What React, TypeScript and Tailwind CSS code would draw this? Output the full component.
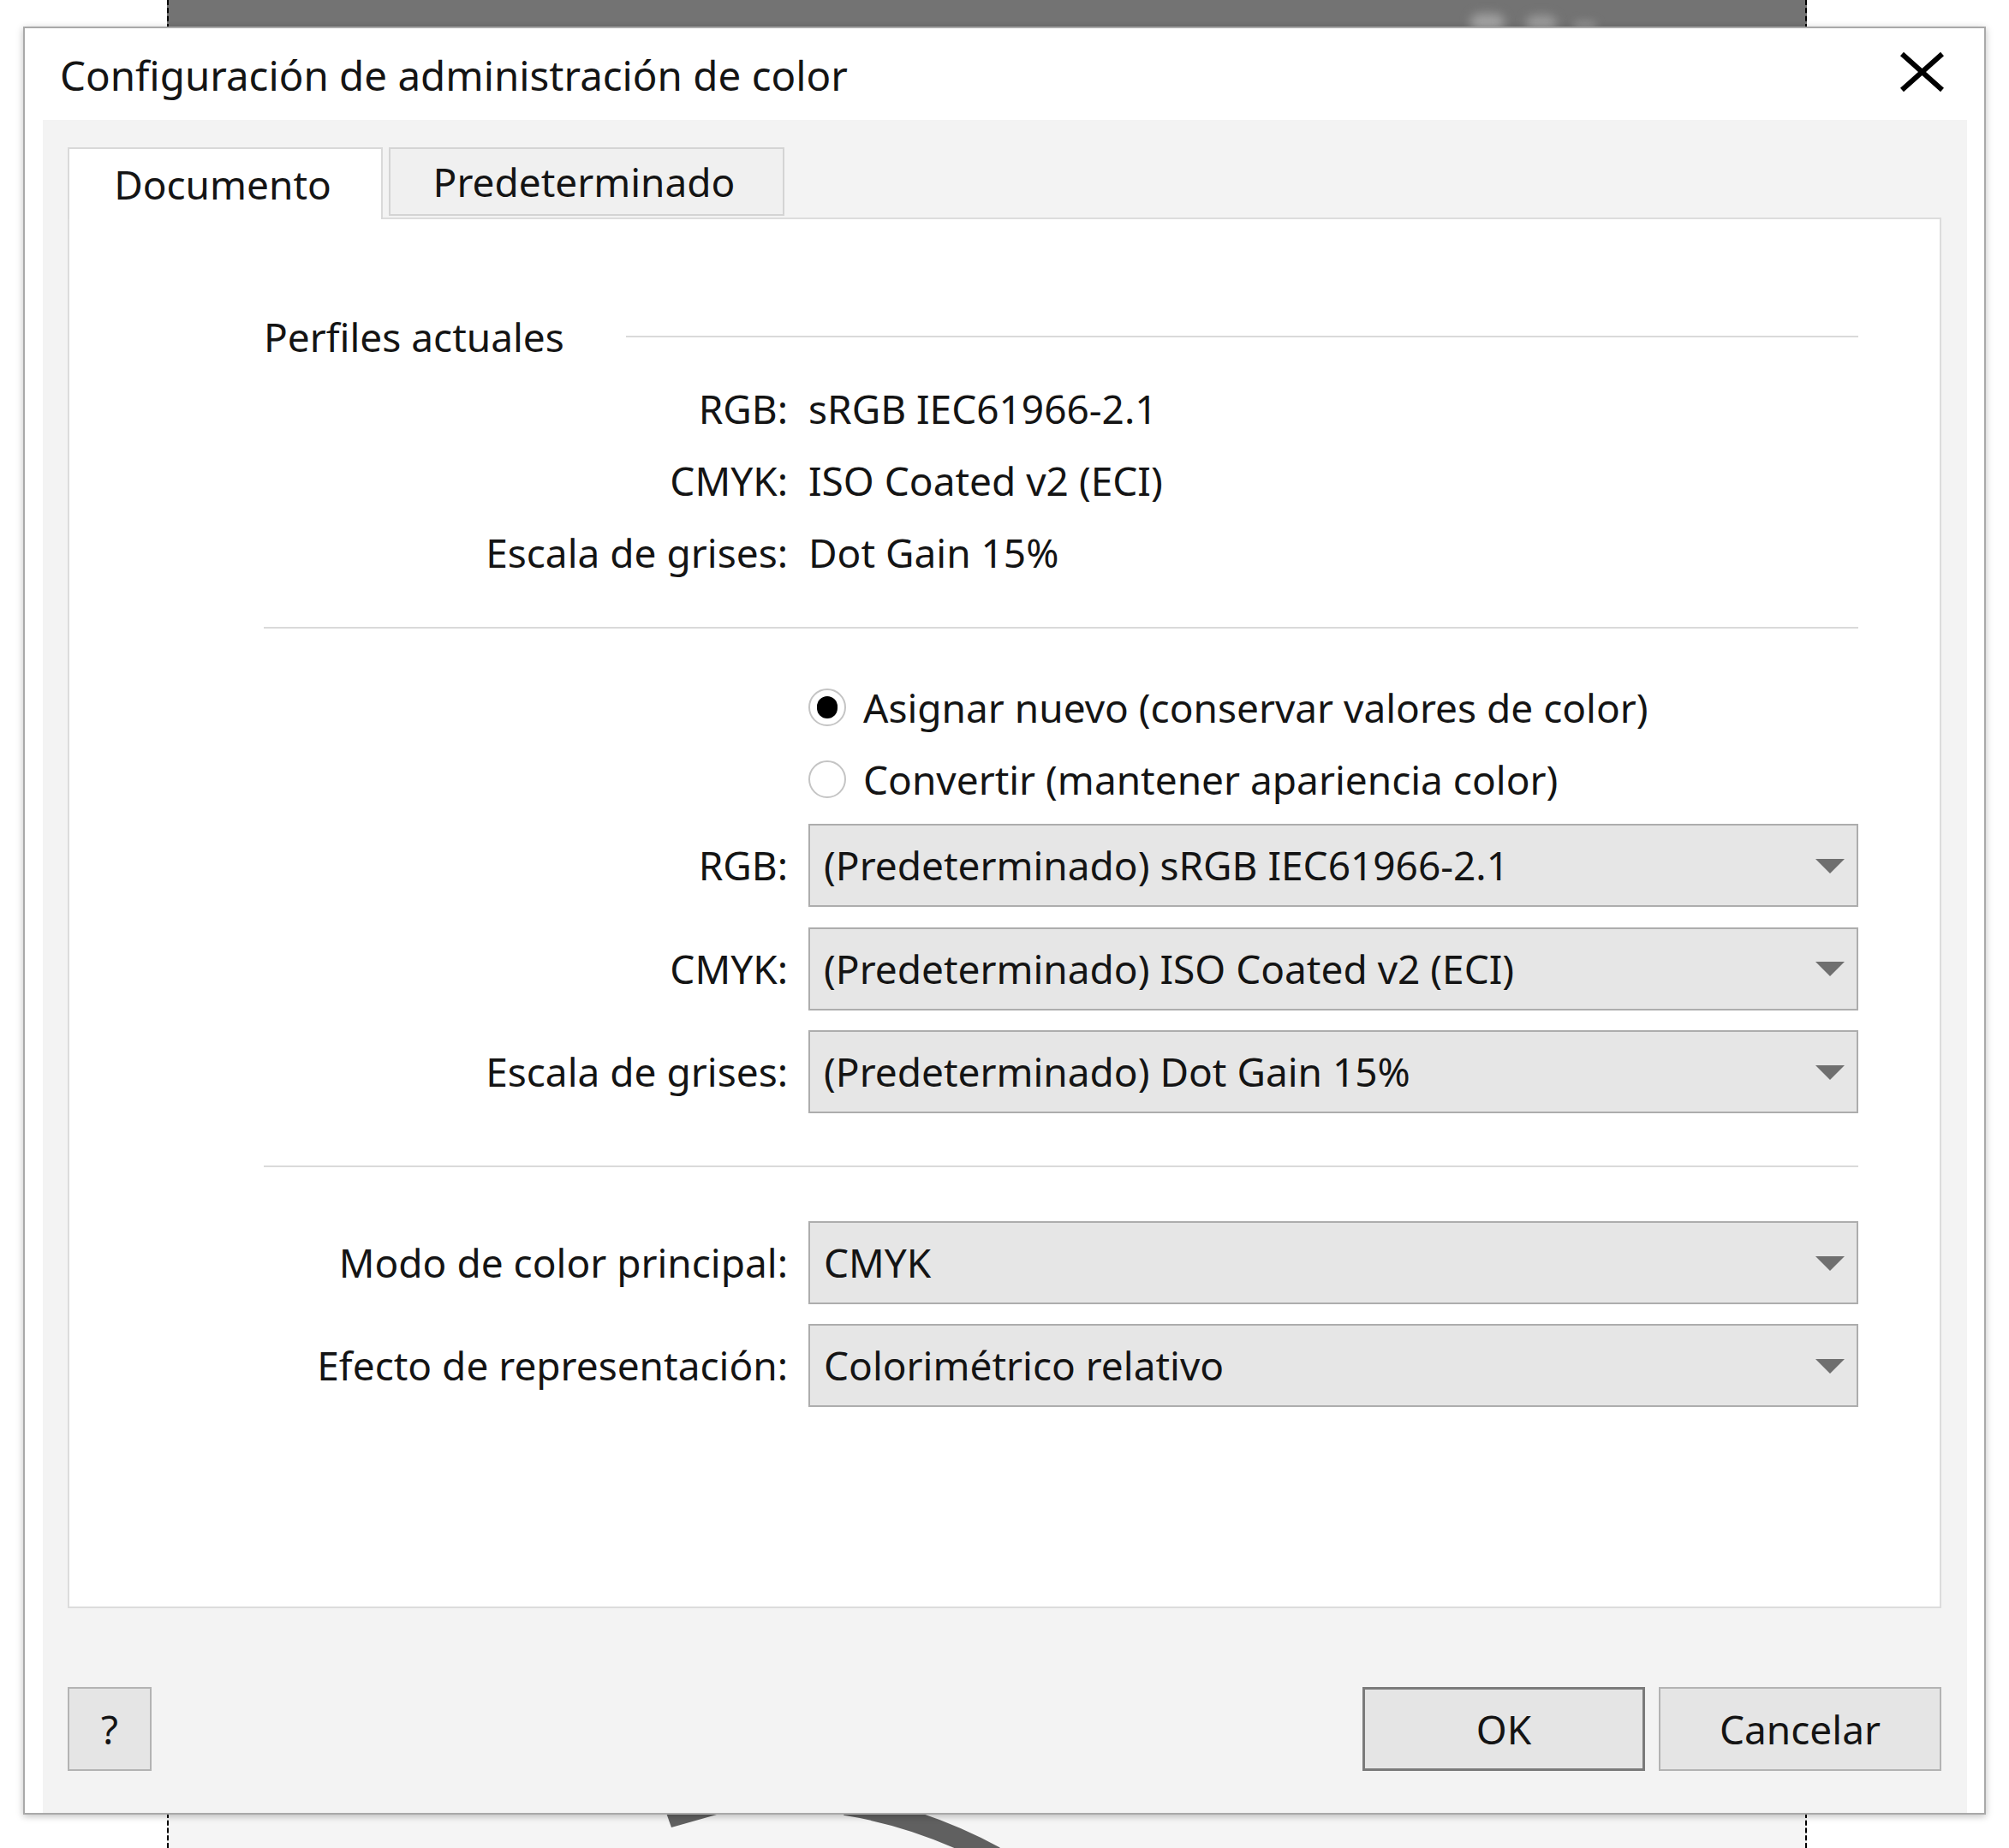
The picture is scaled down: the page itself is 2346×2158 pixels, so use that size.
import React from 'react'

const font = "font-['Noto_Sans','Liberation_Sans',sans-serif]"

function Arrow() {
  return (
    <svg width="34" height="18" viewBox="0 0 34 18" className="shrink-0">
      <path d="M0 1H34L17 18Z" fill="#6f6f6f" />
    </svg>
  )
}

function Select({ value }: { value: string }) {
  return (
    <div className="flex h-[97px] items-center justify-between border-2 border-[#adadad] bg-[#e6e6e6] pl-[16px] pr-[14px]">
      <span className="whitespace-nowrap">{value}</span>
      <Arrow />
    </div>
  )
}

function InfoRow({ label, value }: { label: string; value: string }) {
  return (
    <div className="grid h-[84px] grid-cols-[612px_1fr] items-center gap-x-[24px]">
      <span className="text-right whitespace-nowrap">{label}</span>
      <span className="whitespace-nowrap">{value}</span>
    </div>
  )
}

function SelectRow({ label, value }: { label: string; value: string }) {
  return (
    <div className="grid grid-cols-[612px_1fr] items-center gap-x-[24px]">
      <span className="text-right whitespace-nowrap">{label}</span>
      <Select value={value} />
    </div>
  )
}

function Radio({ checked, label }: { checked?: boolean; label: string }) {
  return (
    <div className="grid h-[84px] grid-cols-[612px_1fr] items-center gap-x-[24px]">
      <span />
      <div className="flex items-center gap-[20px]">
        <span className="flex h-[44px] w-[44px] items-center justify-center rounded-full border-2 border-[#c4c4c4] bg-white">
          {checked && <span className="h-[26px] w-[24px] rounded-full bg-black" />}
        </span>
        <span className="whitespace-nowrap">{label}</span>
      </div>
    </div>
  )
}

function Button({ label, primary, className }: { label: string; primary?: boolean; className?: string }) {
  return (
    <button
      className={
        'flex h-[98px] items-center justify-center bg-[#e5e5e5] ' +
        (primary ? 'border-[3px] border-[#7a7a7a] ' : 'border-2 border-[#b3b3b3] ') +
        (className ?? '')
      }
    >
      {label}
    </button>
  )
}

export default function App() {
  return (
    <div className={`relative h-[2158px] w-[2346px] overflow-hidden bg-white text-[46px] text-[#141414] ${font}`}>
      {/* app behind the dialog */}
      <div className="absolute left-[195px] top-0 h-[34px] w-[1915px] border-x-2 border-dashed border-x-black bg-[#737373]">
        <div className="absolute left-[1520px] top-[16px] h-[22px] w-[40px] rounded-full bg-[#a0a0a0] blur-[6px]" />
        <div className="absolute left-[1585px] top-[18px] h-[20px] w-[36px] rounded-full bg-[#9a9a9a] blur-[6px]" />
        <div className="absolute left-[1640px] top-[24px] h-[14px] w-[28px] rounded-full bg-[#8c8c8c] blur-[5px]" />
      </div>
      <div className="absolute left-[195px] top-[2117px] h-[41px] w-[1915px] border-x-2 border-dashed border-x-black bg-[#f5f5f5]">
        <svg width="1915" height="41" viewBox="195 2117 1915 41" className="absolute inset-0">
          <polygon points="776,2117 842,2117 782,2134" fill="#606060" />
          <path d="M985 2108 Q1075 2122 1160 2168" stroke="#606060" strokeWidth="24" fill="none" />
        </svg>
      </div>

      {/* dialog */}
      <div className="absolute left-[27px] top-[31px] flex h-[2088px] w-[2292px] flex-col border-2 border-[#a9a9a9] bg-white shadow-[0_2px_8px_rgba(0,0,0,0.25)]">
        <div className="flex h-[107px] shrink-0 items-center justify-between pl-[41px] pr-[44px]">
          <span className="pt-[2px] text-[47.5px] leading-none">Configuración de administración de color</span>
          <svg width="57" height="48" viewBox="0 0 57 48" className="mt-[-6px]">
            <path d="M5 3L52 45M52 3L5 45" stroke="#000" strokeWidth="6" />
          </svg>
        </div>

        <div className="mx-[21px] mr-[20px] flex flex-1 flex-col bg-[#f3f3f3] px-[29px] pr-[30px] pt-[32px]">
          {/* tabs */}
          <div className="flex h-[82px] items-start gap-[7px]">
            <div className="relative z-10 -mb-[2px] flex h-[84px] w-[368px] items-center justify-center border-x-2 border-t-2 border-[#d9d9d9] bg-white pr-[6px]">
              Documento
            </div>
            <div className="flex h-[80px] w-[462px] items-center justify-center border-2 border-[#d4d4d4] bg-[#f0f0f0] pr-[6px]">
              Predeterminado
            </div>
          </div>

          {/* panel */}
          <div className="flex h-[1624px] flex-col border-2 border-[#dcdcdc] bg-white pl-[227px] pr-[95px] pt-[95px]">
            <div className="flex h-[84px] items-center">
              <span className="w-[423px] shrink-0 whitespace-nowrap">Perfiles actuales</span>
              <span className="h-[2px] flex-1 bg-[#dadada]" />
            </div>
            <InfoRow label="RGB:" value="sRGB IEC61966-2.1" />
            <InfoRow label="CMYK:" value="ISO Coated v2 (ECI)" />
            <InfoRow label="Escala de grises:" value="Dot Gain 15%" />

            <div className="mt-[45px] h-[2px] bg-[#dadada]" />

            <div className="mt-[50px]">
              <Radio checked label="Asignar nuevo (conservar valores de color)" />
              <Radio label="Convertir (mantener apariencia color)" />
            </div>

            <div className="mt-[10px] flex flex-col gap-[23.5px]">
              <SelectRow label="RGB:" value="(Predeterminado) sRGB IEC61966-2.1" />
              <SelectRow label="CMYK:" value="(Predeterminado) ISO Coated v2 (ECI)" />
              <SelectRow label="Escala de grises:" value="(Predeterminado) Dot Gain 15%" />
            </div>

            <div className="mt-[61px] h-[2px] bg-[#dadada]" />

            <div className="mt-[63px] flex flex-col gap-[23px]">
              <SelectRow label="Modo de color principal:" value="CMYK" />
              <SelectRow label="Efecto de representación:" value="Colorimétrico relativo" />
            </div>
          </div>

          {/* buttons */}
          <div className="mt-[92px] flex items-center">
            <Button label="?" className="w-[98px]" />
            <div className="flex-1" />
            <div className="flex gap-[16px]">
              <Button label="OK" primary className="w-[330px]" />
              <Button label="Cancelar" className="w-[330px]" />
            </div>
          </div>
        </div>
      </div>
    </div>
  )
}
